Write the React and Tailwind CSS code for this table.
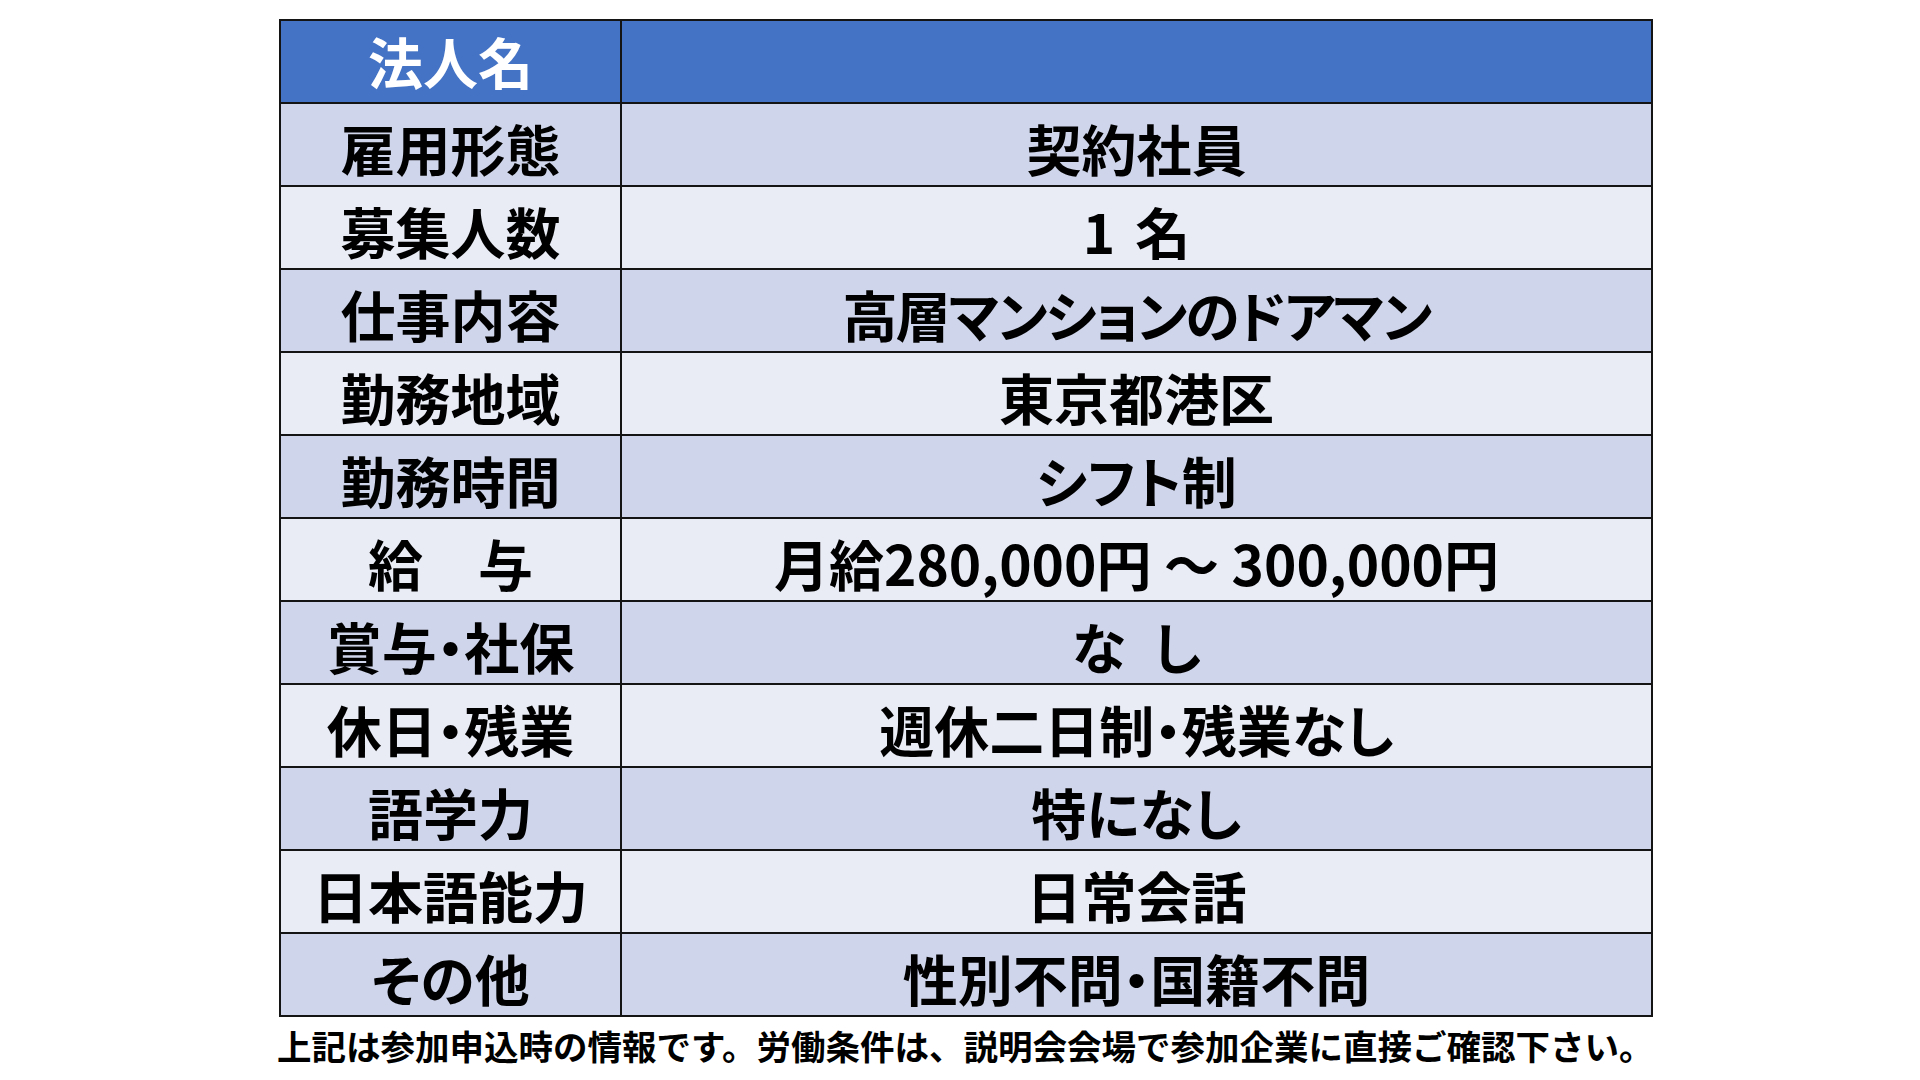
const ROWS = [
  ['雇用形態', '契約社員'],
  ['募集人数', <>1<span className="ml-[20px]">名</span></>],
  ['仕事内容', '高層マンションのドアマン'],
  ['勤務地域', '東京都港区'],
  ['勤務時間', 'シフト制'],
  ['給　与', '月給280,000円 ～ 300,000円'],
  ['賞与・社保', 'な\u2002し'],
  ['休日・残業', '週休二日制・残業なし'],
  ['語学力', '特になし'],
  ['日本語能力', '日常会話'],
  ['その他', '性別不問・国籍不問'],
]

function Cell({ children, className = '' }) {
  return (
    <div className={`flex items-end justify-center leading-none ${className}`}>
      {children}
    </div>
  )
}

export default function App() {
  return (
    <div className="w-[1920px] h-[1080px] bg-white overflow-hidden font-['Noto_Sans_CJK_JP','Noto_Sans',sans-serif] text-black">
      <div className="ml-[279px] pt-[19px] w-[1374px]">
        {/* table */}
        <div className="border-2 border-[#141414] [font-feature-settings:'palt']">
          <div className="grid grid-cols-[341px_1fr] h-[81px] bg-[#4472c4] text-white font-bold text-[55px]">
            <Cell className="pb-[14px] border-r-2 border-[#141414]">法人名</Cell>
            <div />
          </div>
          {ROWS.map(([label, value], i) => (
            <div
              key={label}
              className={`grid grid-cols-[341px_1fr] h-[83px] border-t-2 border-[#141414] font-bold text-[55px] ${
                i % 2 === 0 ? 'bg-[#cfd5ea]' : 'bg-[#e9ebf5]'
              }`}
            >
              <Cell className="pb-[10px] border-r-2 border-[#141414]">{label}</Cell>
              <Cell className={`pb-[10px] ${label === '仕事内容' ? 'tracking-[-2px]' : ''}`}>{value}</Cell>
            </div>
          ))}
        </div>

        <p className="mt-[11px] -ml-[2px] text-[34.5px] font-bold leading-none whitespace-nowrap">
          上記は参加申込時の情報です。労働条件は、説明会会場で参加企業に直接ご確認下さい。
        </p>
      </div>
    </div>
  )
}
